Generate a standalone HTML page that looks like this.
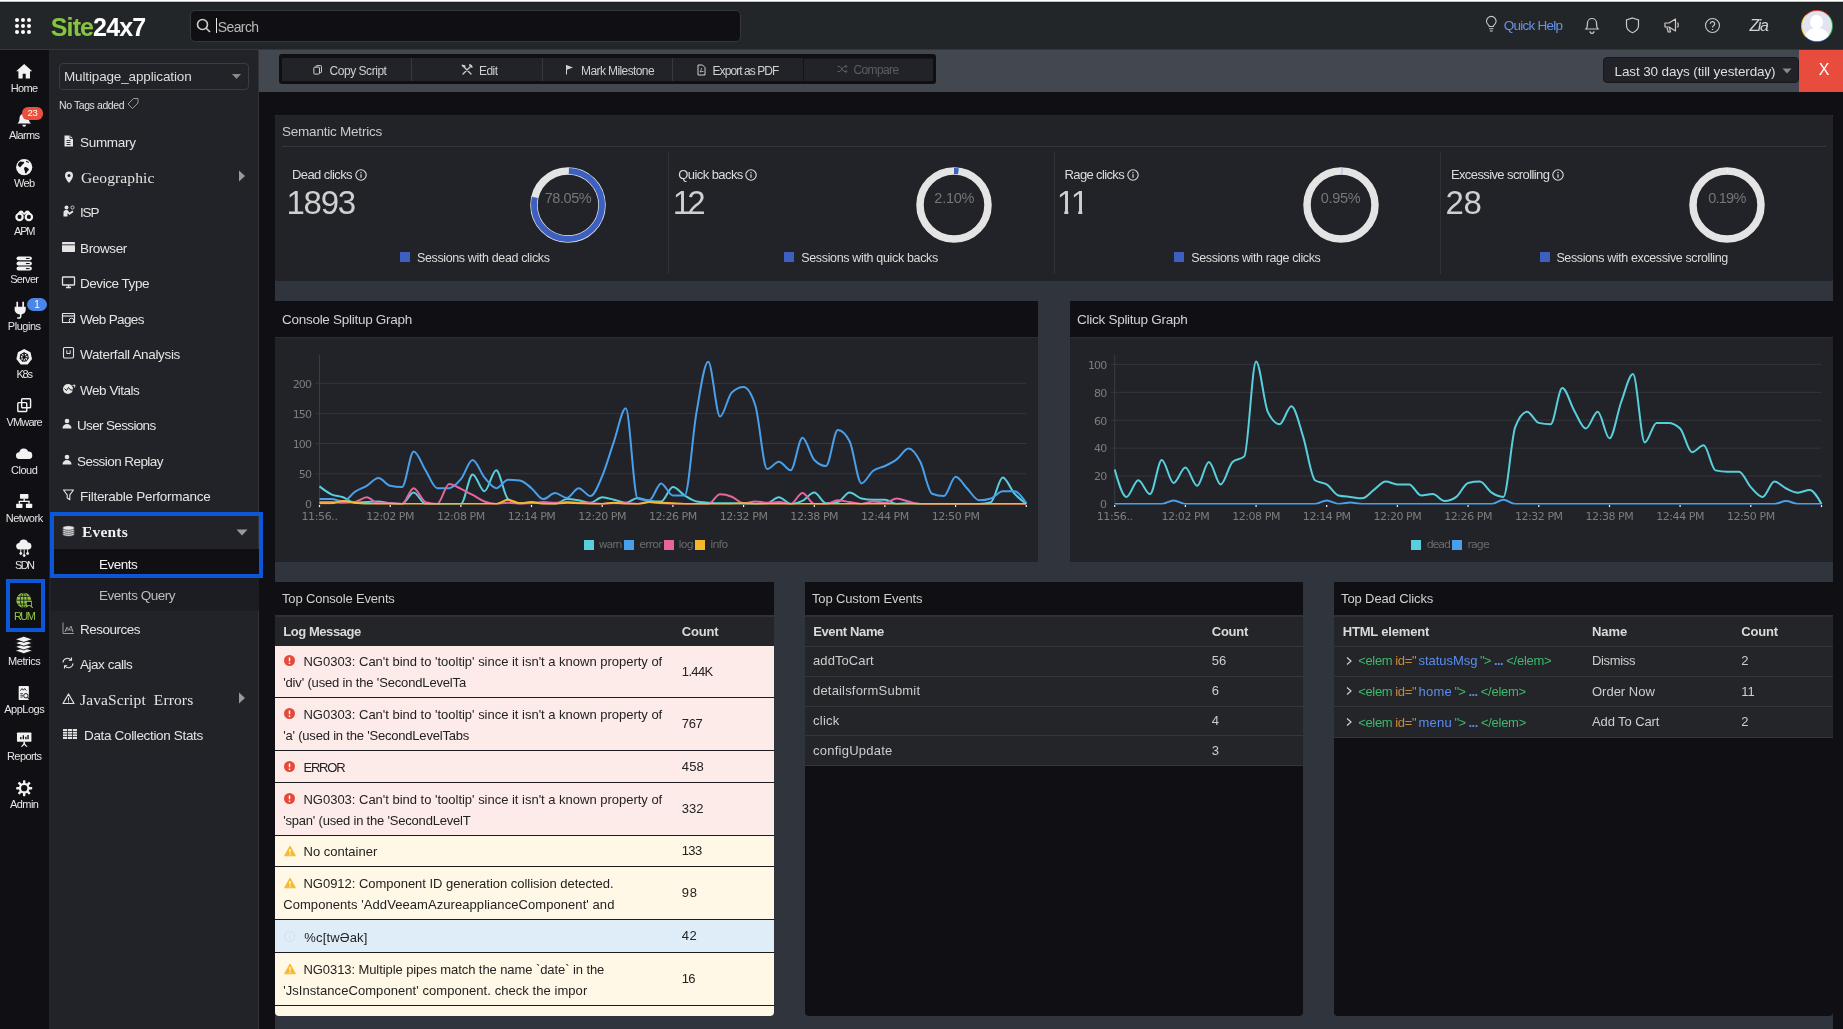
<!DOCTYPE html>
<html lang="en"><head><meta charset="utf-8"><title>Site24x7 - Events</title>
<style>
*{box-sizing:border-box;margin:0;padding:0}
html,body{width:1843px;height:1029px;overflow:hidden;background:#101014;font-family:"Liberation Sans",sans-serif;color:#d6d6d6}
body{position:relative;will-change:transform}
.a{position:absolute}
.t{position:absolute;white-space:nowrap;line-height:20px;height:20px}
svg{position:absolute;overflow:visible}
.serif{font-family:"Liberation Serif",serif}
.dv{font-family:"DejaVu Sans",sans-serif}
</style></head>
<body>
<div class="a" style="left:0px;top:0px;width:1843px;height:1px;background:#ffffff;"></div>
<div class="a" style="left:0px;top:1px;width:1843px;height:1px;background:#c4c4c4;"></div>
<div class="a" style="left:0px;top:2px;width:1843px;height:1px;background:#1b1e21;"></div>
<div class="a" style="left:0px;top:3px;width:1843px;height:46px;background:#222629;"></div>
<div class="a" style="left:0px;top:49px;width:1843px;height:1px;background:#363738;"></div>
<div class="a" style="left:0px;top:50px;width:49px;height:979px;background:#0f0f14;"></div>
<div class="a" style="left:49px;top:50px;width:210px;height:979px;background:#212328;"></div>
<div class="a" style="left:258px;top:50px;width:1px;height:979px;background:#333437;"></div>
<div class="a" style="left:259px;top:50px;width:1584px;height:42px;background:#434750;"></div>
<div class="a" style="left:275px;top:115px;width:1558px;height:914px;background:#30343d;"></div>
<svg class="a" style="left:0;top:0" width="50" height="50" fill="#fff"><circle cx="17" cy="20" r="2"/><circle cx="17" cy="26" r="2"/><circle cx="17" cy="32" r="2"/><circle cx="23" cy="20" r="2"/><circle cx="23" cy="26" r="2"/><circle cx="23" cy="32" r="2"/><circle cx="29" cy="20" r="2"/><circle cx="29" cy="26" r="2"/><circle cx="29" cy="32" r="2"/></svg>
<div class="t " style="top:17px;font-size:25px;color:#fff;left:50.8px;letter-spacing:-0.886px;font-weight:bold;"><span style="color:#86c440">Site</span>24x7</div>
<div class="a" style="left:189.5px;top:10px;width:551.5px;height:32px;background:#101014;border:1px solid #34373c;border-radius:5px;"></div>
<svg style="left:196px;top:18px" width="16" height="16" fill="none" stroke="#d0d0d0" stroke-width="1.6"><circle cx="6.5" cy="6.5" r="5"/><path d="M10.2 10.2L14 14"/></svg>
<div class="a" style="left:216px;top:18px;width:1px;height:15px;background:#e8e8e8;"></div>
<div class="t " style="top:17px;font-size:14px;color:#b9b9b9;left:217.7px;letter-spacing:-0.593px;">Search</div>
<svg style="left:1485px;top:16px" width="13" height="17" fill="none" stroke="#c9c9c9" stroke-width="1.100"><path d="M4.300 10.500c0-1.300-2.800-2.300-2.800-5.300a4.800 4.800 0 0 1 9.600 0c0 3-2.800 4-2.800 5.300z"/><path d="M4.200 12.800h4.200M4.800 15h3"/></svg>
<div class="t " style="top:16px;font-size:13.5px;color:#6593e6;left:1503.7px;letter-spacing:-0.743px;">Quick Help</div>
<svg style="left:1584px;top:16px" width="16" height="18" fill="none" stroke="#c9c9c9" stroke-width="1.2"><path d="M2 13c1.500-1.500 1.500-3 1.500-6a4.500 4.500 0 0 1 9 0c0 3 0 4.500 1.500 6z"/><path d="M6 15.300a2 2 0 0 0 4 0"/></svg>
<svg style="left:1625px;top:17px" width="15" height="17" fill="none" stroke="#c9c9c9" stroke-width="1.2"><path d="M7.500 1L13.500 3v5.500c0 3.500-3 6-6 7.200-3-1.200-6-3.700-6-7.200V3z"/></svg>
<svg style="left:1663px;top:17px" width="18" height="17" fill="none" stroke="#c9c9c9" stroke-width="1.2" stroke-linejoin="round"><path d="M2 6h4l6.500-4v12L6 10H2z"/><path d="M4 10.500l1.200 4.500h2.300L6.500 10.500"/><path d="M14.500 5.500c1 .8 1 4.200 0 5"/></svg>
<svg style="left:1704px;top:17px" width="17" height="17" fill="none" stroke="#c9c9c9" stroke-width="1.1"><circle cx="8.500" cy="8.500" r="7"/><path d="M6.300 6.800a2.200 2.200 0 1 1 3.300 1.900c-.8.500-1.100.9-1.100 1.700M8.500 12v1" stroke-width="1.200"/></svg>
<div class="t " style="top:16px;font-size:16px;color:#d0d0d0;left:1749.5px;letter-spacing:-1.411px;font-style:italic;">Zia</div>
<div class="a" style="left:1801px;top:10px;width:32px;height:32px;border-radius:50%;background:conic-gradient(from -45deg,#e2412f 0 90deg,#2da44e 90deg 180deg,#3b7ae0 180deg 270deg,#f1b511 270deg)"><div class="a" style="left:1.200px;top:1.200px;width:29.600px;height:29.600px;border-radius:50%;background:#e1e4ee;overflow:hidden"><div class="a" style="left:8px;top:4px;width:13px;height:14px;border-radius:50%;background:#fff"></div><div class="a" style="left:2.500px;top:17px;width:24px;height:20px;border-radius:45%;background:#fff"></div></div></div>
<svg style="left:13.8px;top:60.8px" width="20.4" height="20.4" viewBox="0 0 24 24"><path fill="#f2f2f2" d="M12 3.500L2.500 12h2.700v8.500h5v-5.500h3.600v5.500h5V12h2.700z"/></svg>
<div class="t " style="top:78px;font-size:11px;color:#e6e6e6;left:10.799999999999999px;letter-spacing:-0.636px;">Home</div>
<svg style="left:14px;top:109.8px" width="20.4" height="20.4" viewBox="0 0 24 24"><path fill="#f2f2f2" d="M12 4a5.500 5.500 0 0 0-5.500 5.500c0 3.500-.8 5-2.500 6.500h16c-1.700-1.500-2.500-3-2.500-6.500A5.500 5.500 0 0 0 12 4zM9.800 17.500a2.200 2.200 0 0 0 4.400 0z"/></svg>
<div class="a" style="left:22px;top:107px;width:21px;height:13px;border-radius:6px;background:#e8503f;color:#fff;font-size:9.500px;line-height:12.500px;text-align:center;letter-spacing:-0.3px">23</div>
<div class="t " style="top:125px;font-size:11px;color:#e6e6e6;left:9.1px;letter-spacing:-0.672px;">Alarms</div>
<svg style="left:13.8px;top:156.8px" width="20.4" height="20.4" viewBox="0 0 24 24"><circle cx="12" cy="12" r="9.500" fill="#f2f2f2"/><path fill="#0f0f14" d="M7 5.500c2-.5 3 .5 4.500.2 1 .8.300 2-.8 2.500-1.200.6-1 1.800-2.200 2.300-.8.400-.5 1.600-1.500 1.500-1-.2-1.800-1.500-2.500-2.500.3-1.800 1.200-3.200 2.500-4zM12.500 12c1.200-.5 2.500-.2 3.500.8.800.8 1.800.7 1.500 2-.4 1.500-1.800 2-2.500 3.400-.5 1-1.200 1.600-1.800.6-.5-1-.2-2.200-.8-3.200-.5-1-1-2.800.1-3.600zM14 4.500c1.500.2 2.800 1 3.800 2-.8.500-1.800.3-2.600-.2-.6-.4-1.300-1-1.200-1.800z"/></svg>
<div class="t " style="top:173px;font-size:11px;color:#e6e6e6;left:14.049999999999999px;letter-spacing:-0.707px;">Web</div>
<svg style="left:13.8px;top:204.8px" width="20.4" height="20.4" viewBox="0 0 24 24"><g fill="none" stroke="#f2f2f2" stroke-width="2.600"><circle cx="6.500" cy="14" r="3.700"/><circle cx="17.500" cy="14" r="3.700"/></g><path fill="#f2f2f2" d="M4.500 10.500C5 8 6.500 6.500 8.500 6.500c1.500 0 2.500 1 2.500 2.200h2c0-1.200 1-2.200 2.500-2.200 2 0 3.500 1.500 4 4l-1.500.8c-1-1.200-3-1.600-4.500-.6l-1 .8h-1l-1-.8c-1.500-1-3.500-.6-4.500.6z"/></svg>
<div class="t " style="top:221px;font-size:11px;color:#e6e6e6;left:14.049999999999999px;letter-spacing:-1.181px;">APM</div>
<svg style="left:13.8px;top:252.8px" width="20.4" height="20.4" viewBox="0 0 24 24"><rect x="3" y="4" width="18" height="4.600" rx="2.300" fill="#f2f2f2"/><rect x="14" y="5.8" width="4.500" height="1.200" fill="#0f0f14"/><rect x="3" y="10" width="18" height="4.600" rx="2.300" fill="#f2f2f2"/><rect x="14" y="11.8" width="4.500" height="1.200" fill="#0f0f14"/><rect x="3" y="16" width="18" height="4.600" rx="2.300" fill="#f2f2f2"/><rect x="14" y="17.8" width="4.500" height="1.200" fill="#0f0f14"/></svg>
<div class="t " style="top:269px;font-size:11px;color:#e6e6e6;left:10.149999999999999px;letter-spacing:-0.718px;">Server</div>
<svg style="left:10px;top:299.8px" width="20.4" height="20.4" viewBox="0 0 24 24"><path fill="#f2f2f2" d="M7.500 2h2v6h-2zM14.500 2h2v6h-2zM5.500 8h13v3.500c0 3-2 5-5 5.500v2c0 2-1.500 3-3.500 3H8.500v-1.600H10c1 0 1.700-.5 1.700-1.400v-2c-3.200-.4-6.200-2.500-6.200-5.500z"/></svg>
<div class="a" style="left:27px;top:298px;width:20px;height:13px;border-radius:7px;background:#4a86e8;color:#fff;font-size:10px;line-height:13px;text-align:center">1</div>
<div class="t " style="top:316px;font-size:11px;color:#e6e6e6;left:7.849999999999998px;letter-spacing:-0.483px;">Plugins</div>
<svg style="left:13.8px;top:346.8px" width="20.4" height="20.4" viewBox="0 0 24 24"><path fill="#f2f2f2" d="M12 2.500l7.400 3.600 1.800 8-5.100 6.400H7.900l-5.100-6.400 1.800-8z"/><circle cx="12" cy="12" r="4.600" fill="none" stroke="#0f0f14" stroke-width="1.300"/><path d="M12 12L12.00 6.50" stroke="#0f0f14" stroke-width="1.200"/><path d="M12 12L16.27 8.54" stroke="#0f0f14" stroke-width="1.200"/><path d="M12 12L17.38 13.14" stroke="#0f0f14" stroke-width="1.200"/><path d="M12 12L14.50 16.90" stroke="#0f0f14" stroke-width="1.200"/><path d="M12 12L9.76 17.02" stroke="#0f0f14" stroke-width="1.200"/><path d="M12 12L6.69 13.42" stroke="#0f0f14" stroke-width="1.200"/><path d="M12 12L7.55 8.77" stroke="#0f0f14" stroke-width="1.200"/><path d="M12 12L11.71 6.51" stroke="#0f0f14" stroke-width="1.200"/><circle cx="12" cy="12" r="1.300" fill="#0f0f14"/></svg>
<div class="t " style="top:364px;font-size:11px;color:#e6e6e6;left:16.45px;letter-spacing:-1.156px;">K8s</div>
<svg style="left:13.8px;top:394.8px" width="20.4" height="20.4" viewBox="0 0 24 24"><g fill="none" stroke="#f2f2f2" stroke-width="1.700"><rect x="9" y="4.500" width="10.500" height="10.500" rx="1"/><rect x="4.500" y="9" width="10.500" height="10.500" rx="1"/></g></svg>
<div class="t " style="top:412px;font-size:11px;color:#e6e6e6;left:6.5px;letter-spacing:-0.824px;">VMware</div>
<svg style="left:13.8px;top:444.8px" width="20.4" height="20.4" viewBox="0 0 24 24"><path fill="#f2f2f2" d="M6.500 16.500a4 4 0 0 1-.3-8 5.500 5.500 0 0 1 10.500-.8 4.400 4.400 0 0 1 .8 8.800z"/></svg>
<div class="t " style="top:460px;font-size:11px;color:#e6e6e6;left:11.0px;letter-spacing:-0.47px;">Cloud</div>
<svg style="left:13.8px;top:490.8px" width="20.4" height="20.4" viewBox="0 0 24 24"><g fill="#f2f2f2"><rect x="7" y="3.500" width="10" height="5.500" rx=".8"/><rect x="2.500" y="15" width="7.500" height="5" rx=".8"/><rect x="14" y="15" width="7.500" height="5" rx=".8"/><path d="M11.200 9h1.600v2.400h5.700v3.600h-1.600v-2H7.100v2H5.500v-3.600h5.700z"/></g></svg>
<div class="t " style="top:508px;font-size:11px;color:#e6e6e6;left:5.699999999999999px;letter-spacing:-0.478px;">Network</div>
<svg style="left:13.8px;top:537.8px" width="20.4" height="20.4" viewBox="0 0 24 24"><path fill="#f2f2f2" d="M6.500 13.500a3.800 3.800 0 0 1-.3-7.600 5.300 5.300 0 0 1 10.200-.7 4.200 4.200 0 0 1 .8 8.300z"/><g stroke="#f2f2f2" stroke-width="1.100" fill="#f2f2f2"><path d="M8 13.500v4M12 13.500v6.500M16 13.500v4" fill="none"/><circle cx="8" cy="18.200" r="1.200"/><circle cx="12" cy="20.600" r="1.200"/><circle cx="16" cy="18.200" r="1.200"/></g></svg>
<div class="t " style="top:555px;font-size:11px;color:#e6e6e6;left:14.95px;letter-spacing:-1.578px;">SDN</div>
<div class="a" style="left:6px;top:579px;width:39px;height:53px;border:4px solid #0b57d8"></div>
<svg style="left:13.8px;top:589.8px" width="20.4" height="20.4" viewBox="0 0 24 24"><circle cx="11.500" cy="12" r="8.800" fill="#8fc743"/><g fill="none" stroke="#0f0f14" stroke-width=".9"><ellipse cx="11.500" cy="12" rx="4" ry="8.800"/><path d="M11.500 3.200v17.600M2.700 12h17.600M4 7.500h15M4 16.500h15"/></g><rect x="14.500" y="13.500" width="6" height="5" fill="#0f0f14" stroke="#8fc743" stroke-width="1"/><path d="M19.500 18.500l2.500 2.500" stroke="#8fc743" stroke-width="1.300"/></svg>
<div class="t " style="top:606px;font-size:11px;color:#8fc743;left:13.95px;letter-spacing:-1.521px;">RUM</div>
<svg style="left:13.2px;top:633.7px" width="21.6" height="21.6" viewBox="0 0 24 24"><path d="M12 15.100000000000001l10 3.400L12 21.900000000000002 2 18.5z" fill="#f2f2f2" stroke="#0f0f14" stroke-width="1"/><path d="M12 10.9l10 3.400L12 17.700000000000003 2 14.3z" fill="#f2f2f2" stroke="#0f0f14" stroke-width="1"/><path d="M12 6.7l10 3.400L12 13.5 2 10.100000000000001z" fill="#f2f2f2" stroke="#0f0f14" stroke-width="1"/><path d="M12 2.5l10 3.400L12 9.3 2 5.9z" fill="#f2f2f2" stroke="#0f0f14" stroke-width="1"/></svg>
<div class="t " style="top:651px;font-size:11px;color:#e6e6e6;left:8.05px;letter-spacing:-0.45px;">Metrics</div>
<svg style="left:13.8px;top:682.8px" width="20.4" height="20.4" viewBox="0 0 24 24"><rect x="5.500" y="3.500" width="12" height="16.500" rx="1" fill="#f2f2f2"/><path d="M7.500 9l2-2.500 1.500 2 1.500-2 2 2.500" fill="none" stroke="#0f0f14" stroke-width="1"/><path d="M7.500 12.500h3M7.500 14.500h3M7.500 16.500h3" stroke="#0f0f14" stroke-width=".9"/><circle cx="14" cy="15" r="2.600" fill="#f2f2f2" stroke="#0f0f14" stroke-width="1.100"/><path d="M16 17l2.500 2.500" stroke="#0f0f14" stroke-width="1.300"/></svg>
<div class="t " style="top:699px;font-size:11px;color:#e6e6e6;left:4.25px;letter-spacing:-0.505px;">AppLogs</div>
<svg style="left:13.8px;top:728.8px" width="20.4" height="20.4" viewBox="0 0 24 24"><g fill="#f2f2f2"><rect x="3.500" y="4" width="17" height="11" rx="1"/><path d="M11 15h2v2.500l3 3.500h-1.800L12 18.500 9.800 21H8l3-3.500z"/></g><path d="M8 12V9.500M11 12V7.500M14 12V9M16.500 12V7" stroke="#0f0f14" stroke-width="1.600"/></svg>
<div class="t " style="top:746px;font-size:11px;color:#e6e6e6;left:7.0px;letter-spacing:-0.59px;">Reports</div>
<svg style="left:13.8px;top:777.8px" width="20.4" height="20.4" viewBox="0 0 24 24"><g fill="#f2f2f2"><rect x="10.600" y="2.600" width="2.800" height="4.500" rx=".5" transform="rotate(0 12 12)"/><rect x="10.600" y="2.600" width="2.800" height="4.500" rx=".5" transform="rotate(45 12 12)"/><rect x="10.600" y="2.600" width="2.800" height="4.500" rx=".5" transform="rotate(90 12 12)"/><rect x="10.600" y="2.600" width="2.800" height="4.500" rx=".5" transform="rotate(135 12 12)"/><rect x="10.600" y="2.600" width="2.800" height="4.500" rx=".5" transform="rotate(180 12 12)"/><rect x="10.600" y="2.600" width="2.800" height="4.500" rx=".5" transform="rotate(225 12 12)"/><rect x="10.600" y="2.600" width="2.800" height="4.500" rx=".5" transform="rotate(270 12 12)"/><rect x="10.600" y="2.600" width="2.800" height="4.500" rx=".5" transform="rotate(315 12 12)"/></g><circle cx="12" cy="12" r="5" fill="none" stroke="#f2f2f2" stroke-width="2.600"/></svg>
<div class="t " style="top:794px;font-size:11px;color:#e6e6e6;left:9.95px;letter-spacing:-0.537px;">Admin</div>
<div class="a" style="left:59px;top:63px;width:190px;height:27px;background:transparent;border:1px solid #3a3c41;border-radius:4px;"></div>
<div class="t " style="top:67px;font-size:13.5px;color:#dcdcdc;left:64px;letter-spacing:-0.147px;">Multipage_application</div>
<svg style="left:231px;top:73px" width="12" height="7"><path d="M1 1h9L5.500 6z" fill="#8a8a8a"/></svg>
<div class="t " style="top:95px;font-size:10.5px;color:#e0e0e0;left:59px;letter-spacing:-0.412px;">No Tags added</div>
<svg style="left:127px;top:97px" width="12" height="13" fill="none" stroke="#9a9a9a" stroke-width="1"><path d="M6.500 1.500H11v4.500L5.500 11.500 1 7z"/></svg>
<svg style="left:62px;top:134.0px" width="14" height="14" viewBox="0 0 14 14"><path fill="#e4e4e4" d="M2.500 1.500h5.500l3 3v8H2.500z"/><path d="M4.500 6.500h4M4.500 8.500h4M4.500 10.500h4" stroke="#212328" stroke-width=".9"/><path d="M8 1.500v3h3" fill="none" stroke="#212328" stroke-width=".8"/></svg>
<div class="t " style="top:133px;font-size:13.5px;color:#e4e4e4;left:80px;letter-spacing:-0.295px;">Summary</div>
<svg style="left:62px;top:170.0px" width="14" height="14" viewBox="0 0 14 14"><path fill="#e4e4e4" d="M7 1.500a4 4 0 0 0-4 4c0 3 4 7.500 4 7.500s4-4.500 4-7.500a4 4 0 0 0-4-4z"/><circle cx="7" cy="5.500" r="1.500" fill="#212328"/></svg>
<div class="t serif" style="top:168px;font-size:15.5px;color:#e4e4e4;left:81px;letter-spacing:0.109px;">Geographic</div>
<svg style="left:238px;top:170px" width="8" height="12"><path d="M1 0.500L7 6 1 11.500z" fill="#9a9a9a"/></svg>
<svg style="left:62px;top:204.0px" width="14" height="14" viewBox="0 0 14 14"><g fill="#e4e4e4"><circle cx="4.500" cy="3.500" r="2"/><path d="M1.500 12.500V8.500c0-1.500 1-2.500 2.500-2.500h1.500l2 2.500 3-2 1 1.400-4.200 3-1.800-2v3.600z"/><circle cx="10.500" cy="3.500" r="1.600" fill="none" stroke="#e4e4e4" stroke-width=".8"/></g></svg>
<div class="t " style="top:203px;font-size:13.5px;color:#e4e4e4;left:80px;letter-spacing:-1.155px;">ISP</div>
<svg style="left:61px;top:240.0px" width="15" height="14" viewBox="0 0 15 14"><rect x="1" y="2" width="13" height="10" rx=".8" fill="#e4e4e4"/><path d="M1 4.800h13" stroke="#212328" stroke-width=".9"/></svg>
<div class="t " style="top:239px;font-size:13.5px;color:#e4e4e4;left:80px;letter-spacing:-0.374px;">Browser</div>
<svg style="left:61px;top:275.0px" width="15" height="14" viewBox="0 0 15 14"><rect x="1.500" y="2" width="12" height="8" rx=".6" fill="none" stroke="#e4e4e4" stroke-width="1.300"/><path d="M5 12.500h5M7.500 10v2.500" stroke="#e4e4e4" stroke-width="1.300"/></svg>
<div class="t " style="top:274px;font-size:13.5px;color:#e4e4e4;left:80px;letter-spacing:-0.459px;">Device Type</div>
<svg style="left:61px;top:311.0px" width="15" height="14" viewBox="0 0 15 14"><rect x="1.500" y="2.500" width="12" height="9" rx=".6" fill="none" stroke="#e4e4e4" stroke-width="1.200"/><path d="M1.500 5h12" stroke="#e4e4e4" stroke-width="1.200"/><circle cx="10.500" cy="9.500" r="2.300" fill="#212328" stroke="#e4e4e4" stroke-width="1"/></svg>
<div class="t " style="top:310px;font-size:13.5px;color:#e4e4e4;left:80px;letter-spacing:-0.639px;">Web Pages</div>
<svg style="left:62px;top:346.0px" width="13" height="14" viewBox="0 0 13 14"><rect x="1.500" y="1.500" width="10" height="10.500" rx="1.200" fill="none" stroke="#e4e4e4" stroke-width="1.100"/><path d="M4.800 4.300v3.200h3.400V4.300" fill="none" stroke="#e4e4e4" stroke-width="1"/></svg>
<div class="t " style="top:345px;font-size:13.5px;color:#e4e4e4;left:80px;letter-spacing:-0.336px;">Waterfall Analysis</div>
<svg style="left:61px;top:382.0px" width="15" height="14" viewBox="0 0 15 14"><circle cx="7" cy="7" r="5" fill="#e4e4e4"/><path d="M3.500 6.500l2 2 2-3 2 2.500h3" fill="none" stroke="#212328" stroke-width="1"/><path d="M11.500 3.500l2.500-.5-.5 2.500" fill="none" stroke="#e4e4e4" stroke-width="1"/></svg>
<div class="t " style="top:381px;font-size:13.5px;color:#e4e4e4;left:80px;letter-spacing:-0.465px;">Web Vitals</div>
<svg style="left:61px;top:417.0px" width="12" height="14" viewBox="0 0 12 14"><circle cx="6" cy="4" r="2.300" fill="#e4e4e4"/><path d="M1.500 11.500c0-3 2-4.500 4.500-4.500s4.500 1.500 4.500 4.500z" fill="#e4e4e4"/></svg>
<div class="t " style="top:416px;font-size:13.5px;color:#e4e4e4;left:77px;letter-spacing:-0.65px;">User Sessions</div>
<svg style="left:61px;top:453.0px" width="12" height="14" viewBox="0 0 12 14"><circle cx="6" cy="4" r="2.300" fill="#e4e4e4"/><path d="M1.500 11.500c0-3 2-4.500 4.500-4.500s4.500 1.500 4.500 4.500z" fill="#e4e4e4"/></svg>
<div class="t " style="top:452px;font-size:13.5px;color:#e4e4e4;left:77px;letter-spacing:-0.565px;">Session Replay</div>
<svg style="left:62px;top:488.0px" width="13" height="14" viewBox="0 0 13 14"><path d="M1.500 2h10L7.800 6.800v5L5.200 10V6.800z" fill="none" stroke="#e4e4e4" stroke-width="1.100" stroke-linejoin="round"/></svg>
<div class="t " style="top:487px;font-size:13.5px;color:#e4e4e4;left:80px;letter-spacing:-0.28px;">Filterable Performance</div>
<div class="a" style="left:51px;top:549px;width:208px;height:29px;background:#101014;"></div>
<div class="a" style="left:51px;top:578px;width:208px;height:33px;background:#1c1d22;"></div>
<svg style="left:62px;top:524.0px" width="13" height="14" viewBox="0 0 13 14"><g fill="#e4e4e4" stroke="#212328" stroke-width=".7"><ellipse cx="6.500" cy="10" rx="6" ry="2.300"/><ellipse cx="6.500" cy="8" rx="6" ry="2.300"/><ellipse cx="6.500" cy="6" rx="6" ry="2.300"/><ellipse cx="6.500" cy="4" rx="6" ry="2.300"/></g></svg>
<div class="t serif" style="top:522px;font-size:15.5px;color:#f0f0f0;left:82px;letter-spacing:0.184px;font-weight:bold;">Events</div>
<svg style="left:236px;top:529px" width="12" height="7"><path d="M0.500 0.500h11L6 6.500z" fill="#9a9a9a"/></svg>
<div class="t " style="top:555px;font-size:13.5px;color:#f4f4f4;left:99px;letter-spacing:-0.48px;">Events</div>
<div class="t " style="top:586px;font-size:13.5px;color:#bdbdbd;left:99px;letter-spacing:-0.475px;">Events Query</div>
<div class="a" style="left:50px;top:512px;width:213px;height:66px;border:4px solid #0b57d8"></div>
<svg style="left:61px;top:621.0px" width="15" height="14" viewBox="0 0 15 14"><path d="M2 1.500v11h11" fill="none" stroke="#9a9a9a" stroke-width="1"/><path d="M4 11l2-5 2 3 2-4 2 6" fill="none" stroke="#9a9a9a" stroke-width="1"/><path d="M4 9h8" stroke="#9a9a9a" stroke-width=".8"/></svg>
<div class="t " style="top:620px;font-size:13.5px;color:#e4e4e4;left:80px;letter-spacing:-0.503px;">Resources</div>
<svg style="left:61px;top:656.0px" width="14" height="14" viewBox="0 0 14 14"><g fill="none" stroke="#e4e4e4" stroke-width="1.100"><path d="M2 6.500a4.500 4.500 0 0 1 8-2.500M12 7.500a4.500 4.500 0 0 1-8 2.500"/><path d="M10.500 1.500V4.300H7.700M3.500 12.500V9.700h2.800"/></g></svg>
<div class="t " style="top:655px;font-size:13.5px;color:#e4e4e4;left:80px;letter-spacing:-0.463px;">Ajax calls</div>
<svg style="left:62px;top:692.0px" width="13" height="14" viewBox="0 0 13 14"><path d="M6.500 2L12 11.500H1z" fill="none" stroke="#e4e4e4" stroke-width="1.200" stroke-linejoin="round"/><path d="M6.500 5.500v3.200M6.500 9.600v1" stroke="#e4e4e4" stroke-width="1"/></svg>
<div class="t serif" style="top:690px;font-size:15.5px;color:#e4e4e4;left:80px;letter-spacing:0.124px;">JavaScript&nbsp; Errors</div>
<svg style="left:238px;top:692px" width="8" height="12"><path d="M1 0.500L7 6 1 11.500z" fill="#9a9a9a"/></svg>
<svg style="left:62px;top:727.0px" width="16" height="14" viewBox="0 0 16 14"><rect x="1" y="2" width="14" height="10" fill="#e4e4e4"/><path d="M1 4.500h14M1 7h14M1 9.500h14M5.500 2v10M10.500 2v10" stroke="#212328" stroke-width=".8"/></svg>
<div class="t " style="top:726px;font-size:13.5px;color:#e4e4e4;left:84px;letter-spacing:-0.341px;">Data Collection Stats</div>
<div class="a" style="left:279px;top:54px;width:656.5px;height:30px;background:#101014;border-radius:3px;"></div>
<div class="a" style="left:282px;top:58px;width:650.5px;height:22.5px;background:#212328;"></div>
<div class="a" style="left:411px;top:58px;width:1px;height:22.5px;background:#36383d;"></div>
<div class="a" style="left:542px;top:58px;width:1px;height:22.5px;background:#36383d;"></div>
<div class="a" style="left:672px;top:58px;width:1px;height:22.5px;background:#36383d;"></div>
<div class="a" style="left:803px;top:58px;width:1px;height:22.5px;background:#141418;"></div>
<div class="a" style="left:804px;top:58px;width:128.5px;height:0.8px;background:#18191d;"></div>
<svg style="left:312.500px;top:65px" width="9.500" height="10.400" viewBox="0 0 11 12" fill="none" stroke="#cfcfcf" stroke-width="1.150"><rect x="1" y="2.500" width="6.500" height="8" rx="1"/><path d="M3.500 2.500V1.500a.8.800 0 0 1 .8-.8H9a.8.800 0 0 1 .8.800v6.500a.8.800 0 0 1-.8.800h-1.500"/></svg>
<div class="t " style="top:61px;font-size:12px;color:#cfcfcf;left:329.5px;letter-spacing:-0.457px;">Copy Script</div>
<svg style="left:461px;top:64px" width="12" height="12" fill="none" stroke="#cfcfcf" stroke-width="1.300" stroke-linecap="round"><path d="M2 2l8 8M10 2L2 10"/><path d="M1.500 1.500l2.200.6M9 1l1.800 1.800" stroke-width="1.800"/></svg>
<div class="t " style="top:61px;font-size:12px;color:#cfcfcf;left:479px;letter-spacing:-0.547px;">Edit</div>
<svg style="left:565px;top:64px" width="9" height="11"><path d="M1.500 1v9.500" stroke="#cfcfcf" stroke-width="1"/><path d="M2 1.300l6 2.200-6 2.200z" fill="#cfcfcf"/></svg>
<div class="t " style="top:61px;font-size:12px;color:#cfcfcf;left:581px;letter-spacing:-0.597px;">Mark Milestone</div>
<svg style="left:697px;top:64px" width="9" height="12" fill="none" stroke="#cfcfcf" stroke-width="1"><path d="M1 1h4.500L8 3.500V11H1z"/><path d="M3 8c1-1.500 1.500-3 1.500-4M3 8c1.200-.5 2.500-.7 3.500-.5" stroke-width=".8"/></svg>
<div class="t " style="top:61px;font-size:12px;color:#cfcfcf;left:712.5px;letter-spacing:-0.925px;">Export as PDF</div>
<svg style="left:837px;top:64px" width="11" height="10" fill="none" stroke="#5b5d63" stroke-width="1"><path d="M.5 2.500h2.500l4 5h2.500M.5 7.500h2.500l4-5h2.500"/><path d="M8.500 1l1.500 1.500-1.500 1.500M8.500 6l1.500 1.500-1.500 1.500"/></svg>
<div class="t " style="top:60px;font-size:12px;color:#5b5d63;left:853.5px;letter-spacing:-0.623px;">Compare</div>
<div class="a" style="left:1602.5px;top:57px;width:196px;height:26px;background:#212328;border:1px solid #17181c;border-radius:4px;"></div>
<div class="t " style="top:62px;font-size:13.5px;color:#dedede;left:1614.5px;letter-spacing:-0.115px;">Last 30 days (till yesterday)</div>
<svg style="left:1781.500px;top:67.700px" width="10" height="6"><path d="M0.500 0.500h9L5 5.500z" fill="#8a8a8a"/></svg>
<div class="a" style="left:1799px;top:50px;width:44px;height:42px;background:#e84c3d;"></div>
<div class="t " style="top:60px;font-size:16px;color:#fff;left:1674px;width:300px;text-align:center;">X</div>
<div class="a" style="left:275px;top:115px;width:1558px;height:166px;background:#212328;border-radius:3px;"></div>
<div class="t " style="top:122px;font-size:13.5px;color:#c9c9c9;left:282px;letter-spacing:-0.221px;">Semantic Metrics</div>
<div class="a" style="left:282px;top:146px;width:1544px;height:1px;background:#34363b;"></div>
<div class="t " style="top:165px;font-size:13px;color:#dcdcdc;left:292.0px;letter-spacing:-0.588px;">Dead clicks</div>
<svg style="left:354.5px;top:168.5px" width="12" height="12" fill="none" stroke="#dcdcdc" stroke-width="1.100"><circle cx="6" cy="6" r="5.200"/><path d="M6 5.300v3.400M6 3v1.200" stroke-width="1.200"/></svg>
<div class="t " style="top:193px;font-size:33px;color:#cfcfcf;left:286.5px;letter-spacing:-1.23px;height:40px;line-height:40px;top:183px;">1893</div>
<svg style="left:528.0px;top:164.5px" width="80" height="80" viewBox="-40 -40 80 80"><circle r="34" fill="none" stroke="#e4e4e4" stroke-width="7.5"/><circle r="34" fill="none" stroke="#3c5fc0" stroke-width="6.0" stroke-dasharray="166.74 213.63" transform="rotate(-88.5)"/></svg>
<div class="t " style="top:188px;font-size:14.5px;color:#767676;left:544.65px;letter-spacing:-0.415px;">78.05%</div>
<div class="a" style="left:400px;top:252px;width:10px;height:10px;background:#3c5fc0;"></div>
<div class="t " style="top:248px;font-size:12.5px;color:#dcdcdc;left:416.95px;letter-spacing:-0.365px;">Sessions with dead clicks</div>
<div class="a" style="left:668px;top:152px;width:1px;height:122px;background:#303237;"></div>
<div class="t " style="top:165px;font-size:13px;color:#dcdcdc;left:678.3px;letter-spacing:-0.574px;">Quick backs</div>
<svg style="left:745.3px;top:168.5px" width="12" height="12" fill="none" stroke="#dcdcdc" stroke-width="1.100"><circle cx="6" cy="6" r="5.200"/><path d="M6 5.300v3.400M6 3v1.200" stroke-width="1.200"/></svg>
<div class="t " style="top:193px;font-size:33px;color:#cfcfcf;left:672.8px;letter-spacing:-3.909px;height:40px;line-height:40px;top:183px;">12</div>
<svg style="left:914.3px;top:164.5px" width="80" height="80" viewBox="-40 -40 80 80"><circle r="34" fill="none" stroke="#e4e4e4" stroke-width="7.5"/><circle r="34" fill="none" stroke="#3c5fc0" stroke-width="6.0" stroke-dasharray="4.49 213.63" transform="rotate(-90)"/></svg>
<div class="t " style="top:188px;font-size:14.5px;color:#767676;left:934.3px;letter-spacing:-0.225px;">2.10%</div>
<div class="a" style="left:784px;top:252px;width:10px;height:10px;background:#3c5fc0;"></div>
<div class="t " style="top:248px;font-size:12.5px;color:#dcdcdc;left:801.25px;letter-spacing:-0.344px;">Sessions with quick backs</div>
<div class="a" style="left:1054px;top:152px;width:1px;height:122px;background:#303237;"></div>
<div class="t " style="top:165px;font-size:13px;color:#dcdcdc;left:1064.6px;letter-spacing:-0.634px;">Rage clicks</div>
<svg style="left:1126.6px;top:168.5px" width="12" height="12" fill="none" stroke="#dcdcdc" stroke-width="1.100"><circle cx="6" cy="6" r="5.200"/><path d="M6 5.300v3.400M6 3v1.200" stroke-width="1.200"/></svg>
<div class="t " style="top:193px;font-size:33px;color:#cfcfcf;left:1056.8px;height:40px;line-height:40px;top:183px;letter-spacing:-4.400px;"><span style="display:inline-block;clip-path:polygon(0 0,18px 0,18px 28px,11.500px 28px,11.500px 40px,7.500px 40px,7.500px 28px,0 28px)">1</span><span style="display:inline-block;clip-path:polygon(0 0,18px 0,18px 28px,11.500px 28px,11.500px 40px,7.500px 40px,7.500px 28px,0 28px)">1</span></div>
<svg style="left:1300.6px;top:164.5px" width="80" height="80" viewBox="-40 -40 80 80"><circle r="34" fill="none" stroke="#e4e4e4" stroke-width="7.5"/><circle r="34" fill="none" stroke="#c3cdec" stroke-width="6.0" stroke-dasharray="2.03 213.63" transform="rotate(-90)"/></svg>
<div class="t " style="top:188px;font-size:14.5px;color:#767676;left:1320.85px;letter-spacing:-0.325px;">0.95%</div>
<div class="a" style="left:1174px;top:252px;width:10px;height:10px;background:#3c5fc0;"></div>
<div class="t " style="top:248px;font-size:12.5px;color:#dcdcdc;left:1191.35px;letter-spacing:-0.398px;">Sessions with rage clicks</div>
<div class="a" style="left:1440px;top:152px;width:1px;height:122px;background:#303237;"></div>
<div class="t " style="top:165px;font-size:13px;color:#dcdcdc;left:1450.9px;letter-spacing:-0.601px;">Excessive scrolling</div>
<svg style="left:1551.8000000000002px;top:168.5px" width="12" height="12" fill="none" stroke="#dcdcdc" stroke-width="1.100"><circle cx="6" cy="6" r="5.200"/><path d="M6 5.300v3.400M6 3v1.200" stroke-width="1.200"/></svg>
<div class="t " style="top:193px;font-size:33px;color:#cfcfcf;left:1445.4px;letter-spacing:-0.359px;height:40px;line-height:40px;top:183px;">28</div>
<svg style="left:1686.9px;top:164.5px" width="80" height="80" viewBox="-40 -40 80 80"><circle r="34" fill="none" stroke="#e4e4e4" stroke-width="7.5"/><circle r="34" fill="none" stroke="#f6f6f6" stroke-width="6.0" stroke-dasharray="0.41 213.63" transform="rotate(-90)"/></svg>
<div class="t " style="top:188px;font-size:14.5px;color:#767676;left:1708.2px;letter-spacing:-0.745px;">0.19%</div>
<div class="a" style="left:1540px;top:252px;width:10px;height:10px;background:#3c5fc0;"></div>
<div class="t " style="top:248px;font-size:12.5px;color:#dcdcdc;left:1556.4px;letter-spacing:-0.382px;">Sessions with excessive scrolling</div>
<div class="a" style="left:275px;top:301px;width:763px;height:36px;background:#101014;"></div>
<div class="t " style="top:310px;font-size:13.5px;color:#d2d2d2;left:282px;letter-spacing:-0.278px;">Console Splitup Graph</div>
<div class="a" style="left:275px;top:337px;width:763px;height:225px;background:#212328;"></div>
<div class="a" style="left:275px;top:337px;width:763px;height:1px;background:#2d2d30;"></div>
<svg style="left:0;top:0" width="1843" height="1029"><defs><clipPath id="c275"><rect x="317.5" y="340" width="712" height="164.59999999999997"/></clipPath></defs><path d="M315.5 473.8H1026.3" stroke="#34363b" stroke-width="1"/><path d="M315.5 443.5H1026.3" stroke="#34363b" stroke-width="1"/><path d="M315.5 413.4H1026.3" stroke="#34363b" stroke-width="1"/><path d="M315.5 383.3H1026.3" stroke="#34363b" stroke-width="1"/><path d="M319.5 355V503.9" stroke="#3a3c41" stroke-width="1"/><path d="M319.5 486.4C323.4 489.5 327.4 492.5 331.3 494.3C335.2 496.1 339.1 495.9 343.1 497.3C347.0 498.7 350.9 502.7 354.8 502.7C358.8 502.7 362.7 502.3 366.6 502.1C370.5 501.9 374.5 501.5 378.4 501.5C382.3 501.5 386.3 502.9 390.2 503.3C394.1 503.7 398.0 503.9 402.0 503.9C405.9 503.9 409.8 492.5 413.7 492.5C417.7 492.5 421.6 503.9 425.5 503.9C429.4 503.9 433.4 503.9 437.3 503.9C441.2 503.9 445.2 503.9 449.1 503.9C453.0 503.9 456.9 503.9 460.9 503.9C464.8 503.9 468.7 474.4 472.6 474.4C476.6 474.4 480.5 491.3 484.4 491.3C488.3 491.3 492.3 470.2 496.2 470.2C500.1 470.2 504.1 496.3 508.0 499.1C511.9 501.9 515.8 503.3 519.8 503.3C523.7 503.3 527.6 502.7 531.5 502.7C535.5 502.7 539.4 503.1 543.3 503.3C547.2 503.5 551.2 503.9 555.1 503.9C559.0 503.9 563.0 499.1 566.9 499.1C570.8 499.1 574.7 499.7 578.7 500.3C582.6 500.9 586.5 502.7 590.4 502.7C594.4 502.7 598.3 497.3 602.2 497.3C606.1 497.3 610.1 498.8 614.0 499.7C617.9 500.6 621.9 502.7 625.8 502.7C629.7 502.7 633.6 497.9 637.6 497.9C641.5 497.9 645.4 500.5 649.3 500.9C653.3 501.3 657.2 501.5 661.1 501.5C665.0 501.5 669.0 487.0 672.9 487.0C676.8 487.0 680.8 493.1 684.7 495.5C688.6 497.9 692.5 500.7 696.5 501.5C700.4 502.3 704.3 502.4 708.2 502.7C712.2 503.0 716.1 503.3 720.0 503.3C723.9 503.3 727.9 503.3 731.8 503.3C735.7 503.3 739.7 503.9 743.6 503.9C747.5 503.9 751.4 503.9 755.4 503.9C759.3 503.9 763.2 503.7 767.1 503.3C771.1 502.9 775.0 497.3 778.9 497.3C782.8 497.3 786.8 503.9 790.7 503.9C794.6 503.9 798.6 502.8 802.5 500.9C806.4 499.0 810.3 492.5 814.3 492.5C818.2 492.5 822.1 503.3 826.0 503.3C830.0 503.3 833.9 502.9 837.8 502.1C841.7 501.3 845.7 492.5 849.6 492.5C853.5 492.5 857.5 497.7 861.4 498.5C865.3 499.3 869.2 499.7 873.2 499.7C877.1 499.7 881.0 499.7 884.9 499.7C888.9 499.7 892.8 503.9 896.7 503.9C900.6 503.9 904.6 503.3 908.5 503.3C912.4 503.3 916.4 503.9 920.3 503.9C924.2 503.9 928.1 503.9 932.1 503.9C936.0 503.9 939.9 503.9 943.8 503.9C947.8 503.9 951.7 503.9 955.6 503.9C959.5 503.9 963.5 503.9 967.4 503.9C971.3 503.9 975.3 503.9 979.2 503.9C983.1 503.9 987.0 503.3 991.0 502.1C994.9 500.9 998.8 477.4 1002.7 477.4C1006.7 477.4 1010.6 489.3 1014.5 493.7C1018.4 498.1 1022.4 501.0 1026.3 503.9" fill="none" stroke="#58cfdc" stroke-width="2" stroke-linejoin="round" clip-path="url(#c275)"/><path d="M319.5 499.1C323.4 499.1 327.4 499.1 331.3 499.1C335.2 499.1 339.1 501.5 343.1 501.5C347.0 501.5 350.9 494.5 354.8 491.9C358.8 489.3 362.7 488.1 366.6 485.8C370.5 483.5 374.5 478.0 378.4 478.0C382.3 478.0 386.3 485.0 390.2 485.8C394.1 486.6 398.0 487.0 402.0 487.0C405.9 487.0 409.8 451.5 413.7 451.5C417.7 451.5 421.6 464.1 425.5 470.2C429.4 476.3 433.4 488.2 437.3 488.2C441.2 488.2 445.2 488.2 449.1 488.2C453.0 488.2 456.9 483.9 460.9 479.2C464.8 474.5 468.7 460.0 472.6 460.0C476.6 460.0 480.5 472.7 484.4 477.4C488.3 482.1 492.3 488.2 496.2 488.2C500.1 488.2 504.1 479.8 508.0 479.8C511.9 479.8 515.8 480.0 519.8 480.4C523.7 480.8 527.6 485.1 531.5 488.2C535.5 491.4 539.4 499.1 543.3 499.1C547.2 499.1 551.2 493.1 555.1 493.1C559.0 493.1 563.0 497.9 566.9 497.9C570.8 497.9 574.7 488.2 578.7 488.2C582.6 488.2 586.5 496.1 590.4 496.1C594.4 496.1 598.3 485.3 602.2 476.2C606.1 467.1 610.1 452.6 614.0 441.3C617.9 430.0 621.9 408.2 625.8 408.2C629.7 408.2 633.6 497.3 637.6 498.5C641.5 499.7 645.4 500.3 649.3 500.3C653.3 500.3 657.2 483.4 661.1 483.4C665.0 483.4 669.0 495.5 672.9 495.5C676.8 495.5 680.8 495.5 684.7 495.5C688.6 495.5 692.5 434.7 696.5 412.4C700.4 390.1 704.3 361.8 708.2 361.8C712.2 361.8 716.1 416.6 720.0 416.6C723.9 416.6 727.9 396.1 731.8 392.5C735.7 388.9 739.7 387.1 743.6 387.1C747.5 387.1 751.4 393.3 755.4 405.8C759.3 418.2 763.2 469.0 767.1 469.0C771.1 469.0 775.0 461.8 778.9 461.8C782.8 461.8 786.8 470.2 790.7 470.2C794.6 470.2 798.6 437.7 802.5 437.7C806.4 437.7 810.3 455.9 814.3 460.0C818.2 464.0 822.1 466.0 826.0 466.0C830.0 466.0 833.9 429.9 837.8 429.9C841.7 429.9 845.7 433.7 849.6 441.3C853.5 448.9 857.5 483.4 861.4 483.4C865.3 483.4 869.2 473.7 873.2 470.8C877.1 467.9 881.0 467.9 884.9 466.0C888.9 464.1 892.8 462.3 896.7 459.4C900.6 456.4 904.6 448.5 908.5 448.5C912.4 448.5 916.4 454.2 920.3 461.8C924.2 469.3 928.1 492.1 932.1 493.7C936.0 495.3 939.9 496.1 943.8 496.1C947.8 496.1 951.7 476.8 955.6 476.8C959.5 476.8 963.5 484.9 967.4 488.8C971.3 492.8 975.3 500.3 979.2 500.3C983.1 500.3 987.0 499.7 991.0 498.5C994.9 497.3 998.8 491.3 1002.7 491.3C1006.7 491.3 1010.6 491.3 1014.5 491.3C1018.4 491.3 1022.4 497.3 1026.3 503.3" fill="none" stroke="#4a9fea" stroke-width="2" stroke-linejoin="round" clip-path="url(#c275)"/><path d="M319.5 502.1C323.4 502.1 327.4 502.1 331.3 502.1C335.2 502.1 339.1 502.7 343.1 502.7C347.0 502.7 350.9 502.5 354.8 502.1C358.8 501.7 362.7 497.3 366.6 497.3C370.5 497.3 374.5 503.3 378.4 503.3C382.3 503.3 386.3 503.3 390.2 503.3C394.1 503.3 398.0 503.9 402.0 503.9C405.9 503.9 409.8 488.2 413.7 488.2C417.7 488.2 421.6 500.9 425.5 502.1C429.4 503.3 433.4 503.9 437.3 503.9C441.2 503.9 445.2 484.0 449.1 484.0C453.0 484.0 456.9 487.0 460.9 488.8C464.8 490.7 468.7 492.8 472.6 494.9C476.6 497.0 480.5 500.0 484.4 501.5C488.3 503.0 492.3 503.9 496.2 503.9C500.1 503.9 504.1 502.7 508.0 502.7C511.9 502.7 515.8 503.9 519.8 503.9C523.7 503.9 527.6 503.6 531.5 503.3C535.5 503.0 539.4 502.1 543.3 502.1C547.2 502.1 551.2 502.7 555.1 502.7C559.0 502.7 563.0 502.1 566.9 502.1C570.8 502.1 574.7 502.5 578.7 502.7C582.6 502.9 586.5 503.1 590.4 503.3C594.4 503.5 598.3 503.9 602.2 503.9C606.1 503.9 610.1 503.3 614.0 503.3C617.9 503.3 621.9 503.3 625.8 503.3C629.7 503.3 633.6 503.9 637.6 503.9C641.5 503.9 645.4 502.1 649.3 502.1C653.3 502.1 657.2 503.0 661.1 503.3C665.0 503.6 669.0 503.9 672.9 503.9C676.8 503.9 680.8 503.9 684.7 503.9C688.6 503.9 692.5 503.9 696.5 503.9C700.4 503.9 704.3 503.9 708.2 503.9C712.2 503.9 716.1 494.3 720.0 494.3C723.9 494.3 727.9 495.2 731.8 496.7C735.7 498.2 739.7 503.3 743.6 503.3C747.5 503.3 751.4 501.5 755.4 501.5C759.3 501.5 763.2 502.7 767.1 502.7C771.1 502.7 775.0 502.1 778.9 502.1C782.8 502.1 786.8 503.9 790.7 503.9C794.6 503.9 798.6 493.1 802.5 493.1C806.4 493.1 810.3 503.9 814.3 503.9C818.2 503.9 822.1 503.9 826.0 503.9C830.0 503.9 833.9 500.3 837.8 500.3C841.7 500.3 845.7 501.5 849.6 502.1C853.5 502.7 857.5 503.9 861.4 503.9C865.3 503.9 869.2 501.5 873.2 501.5C877.1 501.5 881.0 502.7 884.9 502.7C888.9 502.7 892.8 498.5 896.7 498.5C900.6 498.5 904.6 500.6 908.5 501.5C912.4 502.4 916.4 503.9 920.3 503.9C924.2 503.9 928.1 503.9 932.1 503.9C936.0 503.9 939.9 503.9 943.8 503.9C947.8 503.9 951.7 503.9 955.6 503.9C959.5 503.9 963.5 503.9 967.4 503.9C971.3 503.9 975.3 503.9 979.2 503.9C983.1 503.9 987.0 503.9 991.0 503.9C994.9 503.9 998.8 503.9 1002.7 503.9C1006.7 503.9 1010.6 503.9 1014.5 503.9C1018.4 503.9 1022.4 503.9 1026.3 503.9" fill="none" stroke="#e8649c" stroke-width="2" stroke-linejoin="round" clip-path="url(#c275)"/><path d="M319.5 503.3C323.4 503.3 327.4 503.3 331.3 503.3C335.2 503.3 339.1 500.9 343.1 500.9C347.0 500.9 350.9 502.2 354.8 502.7C358.8 503.2 362.7 503.9 366.6 503.9C370.5 503.9 374.5 503.9 378.4 503.9C382.3 503.9 386.3 503.9 390.2 503.9C394.1 503.9 398.0 503.9 402.0 503.9C405.9 503.9 409.8 503.9 413.7 503.9C417.7 503.9 421.6 503.9 425.5 503.9C429.4 503.9 433.4 503.9 437.3 503.9C441.2 503.9 445.2 503.9 449.1 503.9C453.0 503.9 456.9 503.9 460.9 503.9C464.8 503.9 468.7 503.9 472.6 503.9C476.6 503.9 480.5 503.9 484.4 503.9C488.3 503.9 492.3 503.9 496.2 503.9C500.1 503.9 504.1 499.7 508.0 499.7C511.9 499.7 515.8 503.3 519.8 503.3C523.7 503.3 527.6 502.1 531.5 502.1C535.5 502.1 539.4 503.9 543.3 503.9C547.2 503.9 551.2 503.9 555.1 503.9C559.0 503.9 563.0 502.7 566.9 502.7C570.8 502.7 574.7 503.1 578.7 503.3C582.6 503.5 586.5 503.9 590.4 503.9C594.4 503.9 598.3 503.9 602.2 503.9C606.1 503.9 610.1 502.7 614.0 502.7C617.9 502.7 621.9 503.9 625.8 503.9C629.7 503.9 633.6 503.9 637.6 503.9C641.5 503.9 645.4 502.1 649.3 502.1C653.3 502.1 657.2 502.5 661.1 502.7C665.0 502.9 669.0 503.1 672.9 503.3C676.8 503.5 680.8 503.9 684.7 503.9C688.6 503.9 692.5 503.9 696.5 503.9C700.4 503.9 704.3 503.9 708.2 503.9C712.2 503.9 716.1 503.9 720.0 503.9C723.9 503.9 727.9 503.9 731.8 503.9C735.7 503.9 739.7 503.3 743.6 503.3C747.5 503.3 751.4 503.9 755.4 503.9C759.3 503.9 763.2 503.9 767.1 503.9C771.1 503.9 775.0 503.9 778.9 503.9C782.8 503.9 786.8 503.9 790.7 503.9C794.6 503.9 798.6 503.9 802.5 503.9C806.4 503.9 810.3 503.9 814.3 503.9C818.2 503.9 822.1 503.9 826.0 503.9C830.0 503.9 833.9 503.9 837.8 503.9C841.7 503.9 845.7 503.9 849.6 503.9C853.5 503.9 857.5 503.9 861.4 503.9C865.3 503.9 869.2 503.9 873.2 503.9C877.1 503.9 881.0 503.9 884.9 503.9C888.9 503.9 892.8 503.9 896.7 503.9C900.6 503.9 904.6 503.9 908.5 503.9C912.4 503.9 916.4 503.9 920.3 503.9C924.2 503.9 928.1 503.9 932.1 503.9C936.0 503.9 939.9 503.9 943.8 503.9C947.8 503.9 951.7 503.9 955.6 503.9C959.5 503.9 963.5 503.9 967.4 503.9C971.3 503.9 975.3 503.9 979.2 503.9C983.1 503.9 987.0 503.9 991.0 503.9C994.9 503.9 998.8 503.9 1002.7 503.9C1006.7 503.9 1010.6 503.9 1014.5 503.9C1018.4 503.9 1022.4 503.9 1026.3 503.9" fill="none" stroke="#f5b82a" stroke-width="2" stroke-linejoin="round" clip-path="url(#c275)"/><path d="M319.5 504.9v2.200" stroke="#f0f0f0" stroke-width="1.200"/><path d="M390.2 504.9v2.200" stroke="#f0f0f0" stroke-width="1.200"/><path d="M460.9 504.9v2.200" stroke="#f0f0f0" stroke-width="1.200"/><path d="M531.5 504.9v2.200" stroke="#f0f0f0" stroke-width="1.200"/><path d="M602.2 504.9v2.200" stroke="#f0f0f0" stroke-width="1.200"/><path d="M672.9 504.9v2.200" stroke="#f0f0f0" stroke-width="1.200"/><path d="M743.6 504.9v2.200" stroke="#f0f0f0" stroke-width="1.200"/><path d="M814.3 504.9v2.200" stroke="#f0f0f0" stroke-width="1.200"/><path d="M884.9 504.9v2.200" stroke="#f0f0f0" stroke-width="1.200"/><path d="M955.6 504.9v2.200" stroke="#f0f0f0" stroke-width="1.200"/><path d="M1026.3 504.9v2.200" stroke="#f0f0f0" stroke-width="1.200"/></svg>
<div class="t dv" style="top:495px;font-size:11px;color:#7d7d7d;left:304.9px;letter-spacing:-0.7px;">0</div>
<div class="t dv" style="top:465px;font-size:11px;color:#7d7d7d;left:298.8px;letter-spacing:-0.8px;">50</div>
<div class="t dv" style="top:435px;font-size:11px;color:#7d7d7d;left:292.7px;letter-spacing:-0.833px;">100</div>
<div class="t dv" style="top:405px;font-size:11px;color:#7d7d7d;left:292.7px;letter-spacing:-0.833px;">150</div>
<div class="t dv" style="top:375px;font-size:11px;color:#7d7d7d;left:292.7px;letter-spacing:-0.833px;">200</div>
<div class="t dv" style="top:507px;font-size:11px;color:#7d7d7d;left:301.5px;letter-spacing:-0.386px;">11:56..</div>
<div class="t dv" style="top:507px;font-size:11px;color:#7d7d7d;left:366.28000000000003px;letter-spacing:-0.441px;">12:02 PM</div>
<div class="t dv" style="top:507px;font-size:11px;color:#7d7d7d;left:436.96000000000004px;letter-spacing:-0.441px;">12:08 PM</div>
<div class="t dv" style="top:507px;font-size:11px;color:#7d7d7d;left:507.64px;letter-spacing:-0.441px;">12:14 PM</div>
<div class="t dv" style="top:507px;font-size:11px;color:#7d7d7d;left:578.32px;letter-spacing:-0.441px;">12:20 PM</div>
<div class="t dv" style="top:507px;font-size:11px;color:#7d7d7d;left:649.0000000000001px;letter-spacing:-0.441px;">12:26 PM</div>
<div class="t dv" style="top:507px;font-size:11px;color:#7d7d7d;left:719.6800000000001px;letter-spacing:-0.441px;">12:32 PM</div>
<div class="t dv" style="top:507px;font-size:11px;color:#7d7d7d;left:790.36px;letter-spacing:-0.441px;">12:38 PM</div>
<div class="t dv" style="top:507px;font-size:11px;color:#7d7d7d;left:861.0400000000001px;letter-spacing:-0.441px;">12:44 PM</div>
<div class="t dv" style="top:507px;font-size:11px;color:#7d7d7d;left:931.7200000000001px;letter-spacing:-0.441px;">12:50 PM</div>
<div class="a" style="left:584px;top:540px;width:10px;height:10px;background:#58cfdc;"></div>
<div class="t dv" style="top:535px;font-size:11px;color:#6a6a6a;left:598.7px;letter-spacing:-1.062px;">warn</div>
<div class="a" style="left:624px;top:540px;width:10px;height:10px;background:#4a9fea;"></div>
<div class="t dv" style="top:535px;font-size:11px;color:#6a6a6a;left:639.2px;letter-spacing:-0.768px;">error</div>
<div class="a" style="left:664px;top:540px;width:10px;height:10px;background:#e8649c;"></div>
<div class="t dv" style="top:535px;font-size:11px;color:#6a6a6a;left:678.6px;letter-spacing:-0.794px;">log</div>
<div class="a" style="left:695px;top:540px;width:10px;height:10px;background:#f5b82a;"></div>
<div class="t dv" style="top:535px;font-size:11px;color:#6a6a6a;left:710.3px;letter-spacing:-0.885px;">info</div>
<div class="a" style="left:1070px;top:301px;width:763px;height:36px;background:#101014;"></div>
<div class="t " style="top:310px;font-size:13.5px;color:#d2d2d2;left:1077px;letter-spacing:-0.266px;">Click Splitup Graph</div>
<div class="a" style="left:1070px;top:337px;width:763px;height:225px;background:#212328;"></div>
<div class="a" style="left:1070px;top:337px;width:763px;height:1px;background:#2d2d30;"></div>
<svg style="left:0;top:0" width="1843" height="1029"><defs><clipPath id="c1070"><rect x="1112.7" y="340" width="712" height="164.59999999999997"/></clipPath></defs><path d="M1110.7 476H1821.5" stroke="#34363b" stroke-width="1"/><path d="M1110.7 448.1H1821.5" stroke="#34363b" stroke-width="1"/><path d="M1110.7 420.2H1821.5" stroke="#34363b" stroke-width="1"/><path d="M1110.7 392.3H1821.5" stroke="#34363b" stroke-width="1"/><path d="M1110.7 364.4H1821.5" stroke="#34363b" stroke-width="1"/><path d="M1114.7 355V503.9" stroke="#3a3c41" stroke-width="1"/><path d="M1114.7 503.9C1118.6 503.9 1122.6 503.9 1126.5 503.9C1130.4 503.9 1134.3 503.9 1138.3 503.9C1142.2 503.9 1146.1 503.9 1150.0 503.9C1154.0 503.9 1157.9 503.9 1161.8 503.9C1165.7 503.9 1169.7 500.4 1173.6 500.4C1177.5 500.4 1181.5 503.9 1185.4 503.9C1189.3 503.9 1193.2 503.9 1197.2 503.9C1201.1 503.9 1205.0 503.9 1208.9 503.9C1212.9 503.9 1216.8 503.9 1220.7 503.9C1224.6 503.9 1228.6 503.9 1232.5 503.9C1236.4 503.9 1240.4 503.9 1244.3 503.9C1248.2 503.9 1252.1 503.9 1256.1 503.9C1260.0 503.9 1263.9 503.9 1267.8 503.9C1271.8 503.9 1275.7 503.9 1279.6 503.9C1283.5 503.9 1287.5 503.9 1291.4 503.9C1295.3 503.9 1299.3 503.9 1303.2 503.9C1307.1 503.9 1311.0 503.9 1315.0 503.9C1318.9 503.9 1322.8 500.4 1326.7 500.4C1330.7 500.4 1334.6 503.9 1338.5 503.9C1342.4 503.9 1346.4 502.5 1350.3 502.5C1354.2 502.5 1358.2 503.9 1362.1 503.9C1366.0 503.9 1369.9 503.9 1373.9 503.9C1377.8 503.9 1381.7 503.9 1385.6 503.9C1389.6 503.9 1393.5 503.9 1397.4 503.9C1401.3 503.9 1405.3 503.9 1409.2 503.9C1413.1 503.9 1417.1 503.9 1421.0 503.9C1424.9 503.9 1428.8 503.9 1432.8 503.9C1436.7 503.9 1440.6 503.9 1444.5 503.9C1448.5 503.9 1452.4 503.9 1456.3 503.9C1460.2 503.9 1464.2 503.9 1468.1 503.9C1472.0 503.9 1476.0 503.9 1479.9 503.9C1483.8 503.9 1487.7 503.9 1491.7 503.9C1495.6 503.9 1499.5 499.7 1503.4 499.7C1507.4 499.7 1511.3 503.9 1515.2 503.9C1519.1 503.9 1523.1 503.9 1527.0 503.9C1530.9 503.9 1534.9 503.9 1538.8 503.9C1542.7 503.9 1546.6 503.9 1550.6 503.9C1554.5 503.9 1558.4 503.9 1562.3 503.9C1566.3 503.9 1570.2 503.9 1574.1 503.9C1578.0 503.9 1582.0 503.9 1585.9 503.9C1589.8 503.9 1593.8 503.9 1597.7 503.9C1601.6 503.9 1605.5 503.9 1609.5 503.9C1613.4 503.9 1617.3 503.9 1621.2 503.9C1625.2 503.9 1629.1 503.9 1633.0 503.9C1636.9 503.9 1640.9 503.9 1644.8 503.9C1648.7 503.9 1652.7 503.9 1656.6 503.9C1660.5 503.9 1664.4 503.9 1668.4 503.9C1672.3 503.9 1676.2 503.9 1680.1 503.9C1684.1 503.9 1688.0 503.9 1691.9 503.9C1695.8 503.9 1699.8 503.9 1703.7 503.9C1707.6 503.9 1711.6 503.9 1715.5 503.9C1719.4 503.9 1723.3 503.9 1727.3 503.9C1731.2 503.9 1735.1 503.9 1739.0 503.9C1743.0 503.9 1746.9 503.9 1750.8 503.9C1754.7 503.9 1758.7 503.9 1762.6 503.9C1766.5 503.9 1770.5 503.9 1774.4 503.9C1778.3 503.9 1782.2 501.1 1786.2 501.1C1790.1 501.1 1794.0 503.9 1797.9 503.9C1801.9 503.9 1805.8 503.9 1809.7 503.9C1813.6 503.9 1817.6 503.9 1821.5 503.9" fill="none" stroke="#4a9fea" stroke-width="2" stroke-linejoin="round" clip-path="url(#c1070)"/><path d="M1114.7 469.4C1118.6 483.2 1122.6 496.9 1126.5 496.9C1130.4 496.9 1134.3 480.2 1138.3 480.2C1142.2 480.2 1146.1 494.1 1150.0 494.1C1154.0 494.1 1157.9 459.9 1161.8 459.9C1165.7 459.9 1169.7 483.0 1173.6 483.0C1177.5 483.0 1181.5 467.6 1185.4 467.6C1189.3 467.6 1193.2 485.8 1197.2 485.8C1201.1 485.8 1205.0 462.0 1208.9 462.0C1212.9 462.0 1216.8 484.4 1220.7 484.4C1224.6 484.4 1228.6 465.7 1232.5 462.0C1236.4 458.3 1240.4 460.2 1244.3 456.4C1248.2 452.7 1252.1 361.5 1256.1 361.5C1260.0 361.5 1263.9 403.4 1267.8 411.8C1271.8 420.1 1275.7 424.3 1279.6 424.3C1283.5 424.3 1287.5 406.2 1291.4 406.2C1295.3 406.2 1299.3 424.6 1303.2 436.9C1307.1 449.2 1311.0 477.4 1315.0 480.2C1318.9 483.0 1322.8 481.8 1326.7 484.4C1330.7 486.9 1334.6 494.6 1338.5 495.5C1342.4 496.5 1346.4 496.5 1350.3 496.9C1354.2 497.4 1358.2 498.3 1362.1 498.3C1366.0 498.3 1369.9 492.7 1373.9 489.9C1377.8 487.1 1381.7 481.6 1385.6 481.6C1389.6 481.6 1393.5 484.4 1397.4 484.4C1401.3 484.4 1405.3 484.4 1409.2 484.4C1413.1 484.4 1417.1 495.5 1421.0 495.5C1424.9 495.5 1428.8 494.1 1432.8 494.1C1436.7 494.1 1440.6 501.1 1444.5 501.1C1448.5 501.1 1452.4 499.7 1456.3 496.9C1460.2 494.1 1464.2 483.9 1468.1 483.0C1472.0 482.0 1476.0 481.6 1479.9 481.6C1483.8 481.6 1487.7 490.2 1491.7 492.7C1495.6 495.3 1499.5 496.9 1503.4 496.9C1507.4 496.9 1511.3 437.4 1515.2 427.1C1519.1 416.9 1523.1 411.8 1527.0 411.8C1530.9 411.8 1534.9 422.0 1538.8 422.9C1542.7 423.9 1546.6 424.3 1550.6 424.3C1554.5 424.3 1558.4 388.0 1562.3 388.0C1566.3 388.0 1570.2 403.6 1574.1 410.4C1578.0 417.1 1582.0 428.5 1585.9 428.5C1589.8 428.5 1593.8 411.8 1597.7 411.8C1601.6 411.8 1605.5 438.3 1609.5 438.3C1613.4 438.3 1617.3 412.7 1621.2 402.0C1625.2 391.3 1629.1 374.1 1633.0 374.1C1636.9 374.1 1640.9 442.5 1644.8 442.5C1648.7 442.5 1652.7 422.9 1656.6 422.9C1660.5 422.9 1664.4 422.9 1668.4 422.9C1672.3 422.9 1676.2 424.8 1680.1 428.5C1684.1 432.2 1688.0 452.2 1691.9 452.2C1695.8 452.2 1699.8 445.3 1703.7 445.3C1707.6 445.3 1711.6 469.5 1715.5 470.4C1719.4 471.3 1723.3 471.8 1727.3 471.8C1731.2 471.8 1735.1 471.8 1739.0 471.8C1743.0 471.8 1746.9 483.0 1750.8 487.1C1754.7 491.3 1758.7 496.9 1762.6 496.9C1766.5 496.9 1770.5 481.6 1774.4 481.6C1778.3 481.6 1782.2 486.7 1786.2 488.5C1790.1 490.4 1794.0 492.7 1797.9 492.7C1801.9 492.7 1805.8 489.9 1809.7 489.9C1813.6 489.9 1817.6 496.9 1821.5 503.9" fill="none" stroke="#58cfdc" stroke-width="2" stroke-linejoin="round" clip-path="url(#c1070)"/><path d="M1114.7 504.9v2.200" stroke="#f0f0f0" stroke-width="1.200"/><path d="M1185.4 504.9v2.200" stroke="#f0f0f0" stroke-width="1.200"/><path d="M1256.1 504.9v2.200" stroke="#f0f0f0" stroke-width="1.200"/><path d="M1326.7 504.9v2.200" stroke="#f0f0f0" stroke-width="1.200"/><path d="M1397.4 504.9v2.200" stroke="#f0f0f0" stroke-width="1.200"/><path d="M1468.1 504.9v2.200" stroke="#f0f0f0" stroke-width="1.200"/><path d="M1538.8 504.9v2.200" stroke="#f0f0f0" stroke-width="1.200"/><path d="M1609.5 504.9v2.200" stroke="#f0f0f0" stroke-width="1.200"/><path d="M1680.1 504.9v2.200" stroke="#f0f0f0" stroke-width="1.200"/><path d="M1750.8 504.9v2.200" stroke="#f0f0f0" stroke-width="1.200"/><path d="M1821.5 504.9v2.200" stroke="#f0f0f0" stroke-width="1.200"/></svg>
<div class="t dv" style="top:495px;font-size:11px;color:#7d7d7d;left:1100.1000000000001px;letter-spacing:-0.7px;">0</div>
<div class="t dv" style="top:467px;font-size:11px;color:#7d7d7d;left:1094.0px;letter-spacing:-0.8px;">20</div>
<div class="t dv" style="top:439px;font-size:11px;color:#7d7d7d;left:1094.0px;letter-spacing:-0.8px;">40</div>
<div class="t dv" style="top:412px;font-size:11px;color:#7d7d7d;left:1094.0px;letter-spacing:-0.8px;">60</div>
<div class="t dv" style="top:384px;font-size:11px;color:#7d7d7d;left:1094.0px;letter-spacing:-0.8px;">80</div>
<div class="t dv" style="top:356px;font-size:11px;color:#7d7d7d;left:1087.9px;letter-spacing:-0.833px;">100</div>
<div class="t dv" style="top:507px;font-size:11px;color:#7d7d7d;left:1096.7px;letter-spacing:-0.386px;">11:56..</div>
<div class="t dv" style="top:507px;font-size:11px;color:#7d7d7d;left:1161.48px;letter-spacing:-0.441px;">12:02 PM</div>
<div class="t dv" style="top:507px;font-size:11px;color:#7d7d7d;left:1232.1599999999999px;letter-spacing:-0.441px;">12:08 PM</div>
<div class="t dv" style="top:507px;font-size:11px;color:#7d7d7d;left:1302.84px;letter-spacing:-0.441px;">12:14 PM</div>
<div class="t dv" style="top:507px;font-size:11px;color:#7d7d7d;left:1373.52px;letter-spacing:-0.441px;">12:20 PM</div>
<div class="t dv" style="top:507px;font-size:11px;color:#7d7d7d;left:1444.2px;letter-spacing:-0.441px;">12:26 PM</div>
<div class="t dv" style="top:507px;font-size:11px;color:#7d7d7d;left:1514.88px;letter-spacing:-0.441px;">12:32 PM</div>
<div class="t dv" style="top:507px;font-size:11px;color:#7d7d7d;left:1585.56px;letter-spacing:-0.441px;">12:38 PM</div>
<div class="t dv" style="top:507px;font-size:11px;color:#7d7d7d;left:1656.24px;letter-spacing:-0.441px;">12:44 PM</div>
<div class="t dv" style="top:507px;font-size:11px;color:#7d7d7d;left:1726.92px;letter-spacing:-0.441px;">12:50 PM</div>
<div class="a" style="left:1411px;top:540px;width:10px;height:10px;background:#58cfdc;"></div>
<div class="t dv" style="top:535px;font-size:11px;color:#6a6a6a;left:1426.7px;letter-spacing:-1.046px;">dead</div>
<div class="a" style="left:1452px;top:540px;width:10px;height:10px;background:#4a9fea;"></div>
<div class="t dv" style="top:535px;font-size:11px;color:#6a6a6a;left:1467.5px;letter-spacing:-0.954px;">rage</div>
<div class="a" style="left:275px;top:582px;width:499px;height:434px;background:#101014;border-radius:0 0 4px 4px;"></div>
<div class="t " style="top:589px;font-size:13px;color:#cfcfcf;left:282px;letter-spacing:-0.163px;">Top Console Events</div>
<div class="a" style="left:275px;top:615px;width:499px;height:1.5px;background:#2f3136;"></div>
<div class="a" style="left:275px;top:616.5px;width:499px;height:29.3px;background:#232529;"></div>
<div class="t " style="top:622px;font-size:13px;color:#dadada;left:283.2px;letter-spacing:-0.433px;font-weight:bold;">Log Message</div>
<div class="t " style="top:622px;font-size:13px;color:#dadada;left:681.8px;letter-spacing:-0.189px;font-weight:bold;">Count</div>
<div class="a" style="left:275px;top:645.8px;width:499px;height:370.2px;background:#1c1c1f;border-radius:0 0 4px 4px;"></div>
<div class="a" style="left:275px;top:645.8px;width:499px;height:51.200000000000045px;background:#fdebe9;"></div>
<svg style="left:284px;top:655.2px" width="11" height="11"><circle cx="5.500" cy="5.500" r="5.500" fill="#e5493a"/><path d="M5.500 2.500v3.700M5.500 7.500v1.400" stroke="#fff" stroke-width="1.400"/></svg>
<div class="t " style="top:652px;font-size:13px;color:#222;left:303.5px;letter-spacing:-0.015px;">NG0303: Can't bind to 'tooltip' since it isn't a known property of</div>
<div class="t " style="top:673px;font-size:13px;color:#222;left:283.2px;letter-spacing:-0.161px;">'div' (used in the 'SecondLevelTa</div>
<div class="t " style="top:662px;font-size:13px;color:#222;left:681.8px;letter-spacing:-0.637px;">1.44K</div>
<div class="a" style="left:275px;top:698px;width:499px;height:52px;background:#fdebe9;"></div>
<svg style="left:284px;top:708.2px" width="11" height="11"><circle cx="5.500" cy="5.500" r="5.500" fill="#e5493a"/><path d="M5.500 2.500v3.700M5.500 7.500v1.400" stroke="#fff" stroke-width="1.400"/></svg>
<div class="t " style="top:705px;font-size:13px;color:#222;left:303.5px;letter-spacing:-0.015px;">NG0303: Can't bind to 'tooltip' since it isn't a known property of</div>
<div class="t " style="top:726px;font-size:13px;color:#222;left:283.2px;letter-spacing:-0.199px;">'a' (used in the 'SecondLevelTabs</div>
<div class="t " style="top:714px;font-size:13px;color:#222;left:681.8px;letter-spacing:-0.401px;">767</div>
<div class="a" style="left:275px;top:751px;width:499px;height:31px;background:#fdebe9;"></div>
<svg style="left:284px;top:761.2px" width="11" height="11"><circle cx="5.500" cy="5.500" r="5.500" fill="#e5493a"/><path d="M5.500 2.500v3.700M5.500 7.500v1.400" stroke="#fff" stroke-width="1.400"/></svg>
<div class="t " style="top:758px;font-size:13px;color:#222;left:303.5px;letter-spacing:-1.231px;">ERROR</div>
<div class="t " style="top:757px;font-size:13px;color:#222;left:681.8px;letter-spacing:0.166px;">458</div>
<div class="a" style="left:275px;top:783px;width:499px;height:52px;background:#fdebe9;"></div>
<svg style="left:284px;top:793.2px" width="11" height="11"><circle cx="5.500" cy="5.500" r="5.500" fill="#e5493a"/><path d="M5.500 2.500v3.700M5.500 7.500v1.400" stroke="#fff" stroke-width="1.400"/></svg>
<div class="t " style="top:790px;font-size:13px;color:#222;left:303.5px;letter-spacing:-0.015px;">NG0303: Can't bind to 'tooltip' since it isn't a known property of</div>
<div class="t " style="top:811px;font-size:13px;color:#222;left:283.2px;letter-spacing:-0.2px;">'span' (used in the 'SecondLevelT</div>
<div class="t " style="top:799px;font-size:13px;color:#222;left:681.8px;letter-spacing:-0.001px;">332</div>
<div class="a" style="left:275px;top:836px;width:499px;height:30px;background:#fff8e6;"></div>
<svg style="left:283.500px;top:844.7px" width="12" height="12"><path d="M6 1L11.500 10.800H0.500z" fill="#f7b92b" stroke="#f7b92b" stroke-width=".8" stroke-linejoin="round"/><path d="M6 4v3.400M6 8.400v1.300" stroke="#fff" stroke-width="1.300"/></svg>
<div class="t " style="top:842px;font-size:13px;color:#222;left:303.5px;letter-spacing:0.007px;">No container</div>
<div class="t " style="top:841px;font-size:13px;color:#222;left:681.8px;letter-spacing:-0.668px;">133</div>
<div class="a" style="left:275px;top:867px;width:499px;height:52px;background:#fff8e6;"></div>
<svg style="left:283.500px;top:876.7px" width="12" height="12"><path d="M6 1L11.500 10.800H0.500z" fill="#f7b92b" stroke="#f7b92b" stroke-width=".8" stroke-linejoin="round"/><path d="M6 4v3.400M6 8.400v1.300" stroke="#fff" stroke-width="1.300"/></svg>
<div class="t " style="top:874px;font-size:13px;color:#222;left:303.5px;letter-spacing:-0.027px;">NG0912: Component ID generation collision detected.</div>
<div class="t " style="top:895px;font-size:13px;color:#222;left:283.2px;letter-spacing:0.068px;">Components 'AddVeeamAzureapplianceComponent' and</div>
<div class="t " style="top:883px;font-size:13px;color:#222;left:681.8px;letter-spacing:0.616px;">98</div>
<div class="a" style="left:275px;top:920px;width:499px;height:32px;background:#dfedf9;"></div>
<svg style="left:284px;top:931.2px" width="11" height="11" fill="none" stroke="#d5dfe9" stroke-width="1"><circle cx="5.500" cy="5.500" r="5"/><path d="M5.500 4.800v3.200M5.500 2.800v1"/></svg>
<div class="t " style="top:928px;font-size:13px;color:#222;left:304.3px;letter-spacing:0.156px;">%c[tw&#399;ak]</div>
<div class="t " style="top:926px;font-size:13px;color:#222;left:681.8px;letter-spacing:0.366px;">42</div>
<div class="a" style="left:275px;top:953px;width:499px;height:52px;background:#fff8e6;"></div>
<svg style="left:283.500px;top:962.7px" width="12" height="12"><path d="M6 1L11.500 10.800H0.500z" fill="#f7b92b" stroke="#f7b92b" stroke-width=".8" stroke-linejoin="round"/><path d="M6 4v3.400M6 8.400v1.300" stroke="#fff" stroke-width="1.300"/></svg>
<div class="t " style="top:960px;font-size:13px;color:#222;left:303.5px;letter-spacing:-0.083px;">NG0313: Multiple pipes match the name `date` in the</div>
<div class="t " style="top:981px;font-size:13px;color:#222;left:283.2px;letter-spacing:0.06px;">'JsInstanceComponent' component. check the impor</div>
<div class="t " style="top:969px;font-size:13px;color:#222;left:681.8px;letter-spacing:-0.884px;">16</div>
<div class="a" style="left:275px;top:1006px;width:499px;height:10px;background:#fff8e6;border-radius:0 0 4px 4px;"></div>
<div class="a" style="left:805px;top:582px;width:498px;height:434px;background:#101014;border-radius:0 0 4px 4px;"></div>
<div class="t " style="top:589px;font-size:13px;color:#cfcfcf;left:812px;letter-spacing:-0.136px;">Top Custom Events</div>
<div class="a" style="left:805px;top:615px;width:498px;height:1.5px;background:#2f3136;"></div>
<div class="a" style="left:805px;top:616.5px;width:498px;height:29.3px;background:#232529;"></div>
<div class="t " style="top:622px;font-size:13px;color:#dadada;left:813.2px;letter-spacing:-0.362px;font-weight:bold;">Event Name</div>
<div class="t " style="top:622px;font-size:13px;color:#dadada;left:1211.8px;letter-spacing:-0.269px;font-weight:bold;">Count</div>
<div class="a" style="left:805px;top:645.8px;width:498px;height:1px;background:#34363b;"></div>
<div class="a" style="left:805px;top:646.8px;width:498px;height:28.87px;background:#232529;"></div>
<div class="t " style="top:651px;font-size:13px;color:#cdcdcd;left:813px;letter-spacing:0.091px;">addToCart</div>
<div class="t " style="top:651px;font-size:13px;color:#cdcdcd;left:1211.8px;letter-spacing:-0.134px;">56</div>
<div class="a" style="left:805px;top:675.67px;width:498px;height:1px;background:#34363b;"></div>
<div class="a" style="left:805px;top:676.67px;width:498px;height:28.87px;background:#232529;"></div>
<div class="t " style="top:681px;font-size:13px;color:#cdcdcd;left:813px;letter-spacing:0.185px;">detailsformSubmit</div>
<div class="t " style="top:681px;font-size:13px;color:#cdcdcd;left:1211.8px;letter-spacing:0.466px;">6</div>
<div class="a" style="left:805px;top:705.54px;width:498px;height:1px;background:#34363b;"></div>
<div class="a" style="left:805px;top:706.54px;width:498px;height:28.87px;background:#232529;"></div>
<div class="t " style="top:711px;font-size:13px;color:#cdcdcd;left:813px;letter-spacing:0.244px;">click</div>
<div class="t " style="top:711px;font-size:13px;color:#cdcdcd;left:1211.8px;letter-spacing:0.466px;">4</div>
<div class="a" style="left:805px;top:735.41px;width:498px;height:1px;background:#34363b;"></div>
<div class="a" style="left:805px;top:736.41px;width:498px;height:28.87px;background:#232529;"></div>
<div class="t " style="top:741px;font-size:13px;color:#cdcdcd;left:813px;letter-spacing:0.248px;">configUpdate</div>
<div class="t " style="top:741px;font-size:13px;color:#cdcdcd;left:1211.8px;letter-spacing:0.466px;">3</div>
<div class="a" style="left:805px;top:765.3px;width:498px;height:1px;background:#34363b;"></div>
<div class="a" style="left:1334px;top:582px;width:499px;height:434px;background:#101014;border-radius:0 0 4px 4px;"></div>
<div class="t " style="top:589px;font-size:13px;color:#cfcfcf;left:1341px;letter-spacing:-0.116px;">Top Dead Clicks</div>
<div class="a" style="left:1334px;top:615px;width:499px;height:1.5px;background:#2f3136;"></div>
<div class="a" style="left:1334px;top:616.5px;width:499px;height:29.3px;background:#232529;"></div>
<div class="t " style="top:622px;font-size:13px;color:#dadada;left:1342.7px;letter-spacing:-0.176px;font-weight:bold;">HTML element</div>
<div class="t " style="top:622px;font-size:13px;color:#dadada;left:1592px;letter-spacing:-0.055px;font-weight:bold;">Name</div>
<div class="t " style="top:622px;font-size:13px;color:#dadada;left:1741.3px;letter-spacing:-0.189px;font-weight:bold;">Count</div>
<div class="a" style="left:1334px;top:645.8px;width:499px;height:1px;background:#34363b;"></div>
<div class="a" style="left:1334px;top:646.8px;width:499px;height:28.90000000000009px;background:#232529;"></div>
<svg style="left:1345px;top:655.5px" width="8" height="10" fill="none" stroke="#cfcfcf" stroke-width="1.200"><path d="M2 1.500L6 5 2 8.500"/></svg>
<div class="t " style="top:651px;font-size:13px;color:#3cba6c;left:1358.3px;letter-spacing:-0.376px;">&lt;elem</div>
<div class="t " style="top:651px;font-size:13px;color:#c98a3c;left:1395.3px;letter-spacing:-0.332px;">id="</div>
<div class="t " style="top:651px;font-size:13px;color:#5b8def;left:1418.5px;letter-spacing:-0.039px;">statusMsg</div>
<div class="t " style="top:651px;font-size:13px;color:#3cba6c;left:1480.0px;letter-spacing:-0.759px;">"&gt;</div>
<div class="t " style="top:651px;font-size:13px;color:#5b8def;left:1493.9px;letter-spacing:-0.515px;font-weight:bold;">...</div>
<div class="t " style="top:651px;font-size:13px;color:#3cba6c;left:1506.3000000000002px;letter-spacing:-0.269px;">&lt;/elem&gt;</div>
<div class="t " style="top:651px;font-size:13px;color:#cdcdcd;left:1592px;letter-spacing:-0.329px;">Dismiss</div>
<div class="t " style="top:651px;font-size:13px;color:#cdcdcd;left:1741.3px;">2</div>
<div class="a" style="left:1334px;top:675.7px;width:499px;height:1px;background:#34363b;"></div>
<div class="a" style="left:1334px;top:676.7px;width:499px;height:29.699999999999932px;background:#232529;"></div>
<svg style="left:1345px;top:686.3px" width="8" height="10" fill="none" stroke="#cfcfcf" stroke-width="1.200"><path d="M2 1.500L6 5 2 8.500"/></svg>
<div class="t " style="top:682px;font-size:13px;color:#3cba6c;left:1358.3px;letter-spacing:-0.376px;">&lt;elem</div>
<div class="t " style="top:682px;font-size:13px;color:#c98a3c;left:1395.3px;letter-spacing:-0.332px;">id="</div>
<div class="t " style="top:682px;font-size:13px;color:#5b8def;left:1418.5px;letter-spacing:0.217px;">home</div>
<div class="t " style="top:682px;font-size:13px;color:#3cba6c;left:1454.5px;letter-spacing:-0.759px;">"&gt;</div>
<div class="t " style="top:682px;font-size:13px;color:#5b8def;left:1468.4px;letter-spacing:-0.515px;font-weight:bold;">...</div>
<div class="t " style="top:682px;font-size:13px;color:#3cba6c;left:1480.8000000000002px;letter-spacing:-0.269px;">&lt;/elem&gt;</div>
<div class="t " style="top:682px;font-size:13px;color:#cdcdcd;left:1592px;letter-spacing:-0.007px;">Order Now</div>
<div class="t " style="top:682px;font-size:13px;color:#cdcdcd;left:1741.3px;">11</div>
<div class="a" style="left:1334px;top:706.4px;width:499px;height:1px;background:#34363b;"></div>
<div class="a" style="left:1334px;top:707.4px;width:499px;height:29.800000000000068px;background:#232529;"></div>
<svg style="left:1345px;top:717px" width="8" height="10" fill="none" stroke="#cfcfcf" stroke-width="1.200"><path d="M2 1.500L6 5 2 8.500"/></svg>
<div class="t " style="top:713px;font-size:13px;color:#3cba6c;left:1358.3px;letter-spacing:-0.376px;">&lt;elem</div>
<div class="t " style="top:713px;font-size:13px;color:#c98a3c;left:1395.3px;letter-spacing:-0.332px;">id="</div>
<div class="t " style="top:713px;font-size:13px;color:#5b8def;left:1418.5px;letter-spacing:0.242px;">menu</div>
<div class="t " style="top:713px;font-size:13px;color:#3cba6c;left:1454.6px;letter-spacing:-0.759px;">"&gt;</div>
<div class="t " style="top:713px;font-size:13px;color:#5b8def;left:1468.5px;letter-spacing:-0.515px;font-weight:bold;">...</div>
<div class="t " style="top:713px;font-size:13px;color:#3cba6c;left:1480.9px;letter-spacing:-0.269px;">&lt;/elem&gt;</div>
<div class="t " style="top:712px;font-size:13px;color:#cdcdcd;left:1592px;letter-spacing:-0.102px;">Add To Cart</div>
<div class="t " style="top:712px;font-size:13px;color:#cdcdcd;left:1741.3px;">2</div>
<div class="a" style="left:1334px;top:737.2px;width:499px;height:1px;background:#34363b;"></div>
</body></html>
